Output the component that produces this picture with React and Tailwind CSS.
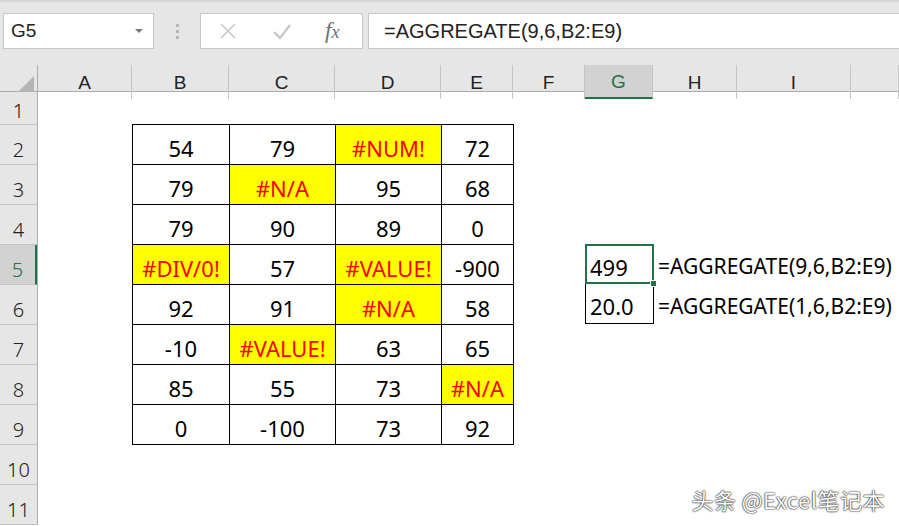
import React from "react";

const cols = ["A", "B", "C", "D", "E", "F", "G", "H", "I", ""];
const rowNums = [1, 2, 3, 4, 5, 6, 7, 8, 9, 10, 11];

// value, isError
const data = [
  ["54", "79", "#NUM!", "72"],
  ["79", "#N/A", "95", "68"],
  ["79", "90", "89", "0"],
  ["#DIV/0!", "57", "#VALUE!", "-900"],
  ["92", "91", "#N/A", "58"],
  ["-10", "#VALUE!", "63", "65"],
  ["85", "55", "73", "#N/A"],
  ["0", "-100", "73", "92"],
];

const cellFont = { fontFamily: '"Noto Sans", "Open Sans", sans-serif' };

function Toolbar() {
  return (
    <div className="h-[65px] bg-[#e6e6e6] relative">
      <div className="h-[3px] bg-gradient-to-b from-[#cfcfcf] to-[#e6e6e6]" />
      <div className="flex items-start pt-[10px] pl-[3px]">
        <div className="w-[151px] h-[36px] bg-white border border-[#c6c6c6] flex items-center justify-between pl-[7px] pr-[10px]">
          <span className="text-[19px] text-[#222]" style={{ fontFamily: '"Liberation Sans", Arial, sans-serif' }}>
            G5
          </span>
          <svg width="8" height="5" viewBox="0 0 8 5">
            <path d="M0 0 L8 0 L4 4 Z" fill="#777" />
          </svg>
        </div>
        <div className="w-[46px] h-[36px] flex items-center justify-center">
          <div className="flex flex-col gap-[3px]">
            <div className="w-[3px] h-[3px] bg-[#b5b5b5]" />
            <div className="w-[3px] h-[3px] bg-[#b5b5b5]" />
            <div className="w-[3px] h-[3px] bg-[#b5b5b5]" />
          </div>
        </div>
        <div className="w-[163px] h-[36px] bg-white border border-[#c6c6c6] flex items-center">
          <svg width="18" height="18" viewBox="0 0 18 18" className="ml-[18px]">
            <path d="M2 2 L16 16 M16 2 L2 16" stroke="#c8c8c8" strokeWidth="1.6" />
          </svg>
          <svg width="20" height="18" viewBox="0 0 20 18" className="ml-[35px]">
            <path d="M2 10 L8 16 L18 3" stroke="#c8c8c8" strokeWidth="2.4" fill="none" />
          </svg>
          <span
            className="ml-[33px] text-[23px] italic text-[#707070]"
            style={{ fontFamily: '"Liberation Serif", "Times New Roman", serif' }}
          >
            f<span className="text-[18px]">x</span>
          </span>
        </div>
        <div className="ml-[5px] flex-1 h-[36px] bg-white border border-[#c6c6c6] border-r-0 flex items-center pl-[15px]">
          <span className="text-[20px] text-[#222]" style={{ fontFamily: '"Liberation Sans", Arial, sans-serif' }}>
            =AGGREGATE(9,6,B2:E9)
          </span>
        </div>
      </div>
    </div>
  );
}

function Header() {
  return (
    <div className="grid grid-cols-[38px_94px_97px_106px_106px_72px_72px_68px_84px_114px_48px] h-[27px] bg-[#e6e6e6] border-b border-[#ababab]">
      <div className="border-r border-[#ababab] flex items-end justify-end pr-[3px] pb-[3px]">
        <svg width="20" height="20" viewBox="0 0 20 20">
          <path d="M20 0 L20 20 L0 20 Z" fill="#b4b4b4" />
        </svg>
      </div>
      {cols.map((c, i) => (
        <div
          key={i}
          className={`flex items-center justify-center pt-[3px] text-[19px] border-r border-[#c4c4c4] ${
            c === "G" ? "bg-[#d2d2d2] text-[#217346] border-b-2 border-b-[#217346]" : "text-[#222]"
          }`}
          style={{ fontFamily: '"Liberation Sans", Arial, sans-serif' }}
        >
          {c}
        </div>
      ))}
    </div>
  );
}

function RowHeaders() {
  return (
    <div className="w-[38px] bg-[#e6e6e6] border-r border-[#ababab] flex flex-col">
      {rowNums.map((n) => (
        <div
          key={n}
          className={`flex items-center justify-center border-b border-[#c4c4c4] text-[20px] ${
            n === 1 ? "h-[33px] pt-[6px]" : "h-[40px] pt-[10px]"
          } ${n === 5 ? "bg-[#d2d2d2] text-[#217346] border-r-2 border-r-[#217346]" : "text-[#222]"}`}
          style={{ fontFamily: '"Noto Sans", "Liberation Sans", sans-serif', fontWeight: 300 }}
        >
          {n}
        </div>
      ))}
    </div>
  );
}

function DataTable() {
  return (
    <div className="grid grid-cols-[97px_106px_106px_72px] border-l border-t border-black">
      {data.flat().map((v, i) => {
        const err = v.startsWith("#");
        return (
          <div
            key={i}
            className={`h-[40px] border-r border-b border-black flex items-center justify-center pt-[7px] text-[22px] whitespace-nowrap ${
              err ? "bg-[#ffff00] text-[#ff0000]" : "bg-white text-black"
            }`}
            style={cellFont}
          >
            {v}
          </div>
        );
      })}
    </div>
  );
}

function Results() {
  return (
    <div className="flex flex-col">
      <div className="flex h-[40px]">
        <div className="w-[69px] h-[40px] border-2 border-[#217346] relative flex items-center pl-[3px] pt-[6px] text-[22px] text-black" style={cellFont}>
          499
          <div className="absolute right-[-5px] bottom-[-5px] w-[7px] h-[7px] bg-[#217346] border border-white" />
        </div>
        <div className="flex items-center pl-[4px] pt-[6px] text-[21px] text-black whitespace-nowrap" style={cellFont}>
          =AGGREGATE(9,6,B2:E9)
        </div>
      </div>
      <div className="flex h-[40px]">
        <div className="w-[69px] h-[40px] border border-t-0 border-black flex items-center pl-[4px] pt-[6px] text-[22px] text-black" style={cellFont}>
          20.0
        </div>
        <div className="flex items-center pl-[4px] pt-[6px] text-[21px] text-black whitespace-nowrap" style={cellFont}>
          =AGGREGATE(1,6,B2:E9)
        </div>
      </div>
    </div>
  );
}

export default function App() {
  return (
    <div className="w-[899px] h-[526px] overflow-hidden bg-white relative">
      <Toolbar />
      <Header />
      <div className="flex">
        <RowHeaders />
        <div className="flex-1 relative">
          <div className="flex pt-[32px] pl-[94px]">
            <DataTable />
            <div className="pl-[71px] pt-[120px]">
              <Results />
            </div>
          </div>
        </div>
      </div>
      <div
        className="absolute right-[14px] bottom-[10px] text-[22px] text-white tracking-[0.5px]"
        style={{
          fontFamily: '"Noto Sans CJK SC", "Noto Sans", sans-serif',
          textShadow: "0 0 2px #000, 0 0 1px #000",
        }}
      >
        头条 @Excel笔记本
      </div>
    </div>
  );
}
